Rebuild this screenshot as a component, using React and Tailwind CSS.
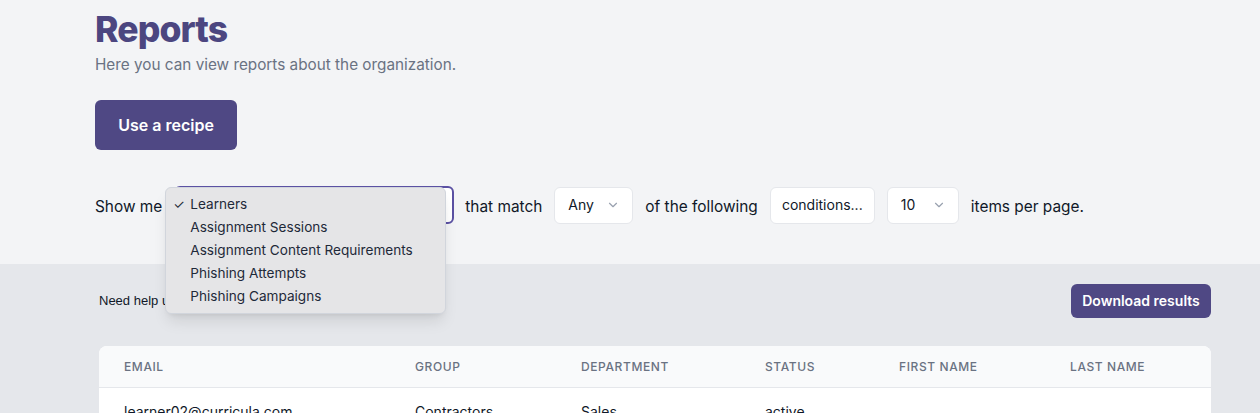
import { ChevronDown } from 'lucide-react';

const font = { fontFamily: 'Inter, "Noto Sans", sans-serif' };
const body = { fontFamily: '"Liberation Sans", Arial, sans-serif' };

const options = [
  'Learners',
  'Assignment Sessions',
  'Assignment Content Requirements',
  'Phishing Attempts',
  'Phishing Campaigns',
];

const columns = ['Email', 'Group', 'Department', 'Status', 'First name', 'Last name'];
const row = ['learner02@curricula.com', 'Contractors', 'Sales', 'active', '', ''];

const SmallSelect = ({ value, width }) => (
  <div
    className={`flex items-center justify-between h-[37px] ${width} pl-[13px] pr-[12px] bg-white border border-gray-200 rounded-md text-sm text-gray-900`}
  >
    <span>{value}</span>
    <ChevronDown className="w-[14px] h-[14px] text-gray-400" strokeWidth={2} />
  </div>
);

export default function App() {
  return (
    <div className="min-h-screen bg-gray-200" style={font}>
      {/* Header area */}
      <div className="bg-gray-100 px-[95px] pt-[10px] h-[264px]">
        <h1 className="text-[35.5px] leading-[40px] font-extrabold tracking-tight text-[#4c4680]">Reports</h1>
        <p className="text-[15.3px] leading-6 text-gray-500 mt-[3px]">Here you can view reports about the organization.</p>
        <button
          type="button"
          className="mt-[23px] h-[50px] w-[142px] rounded-md bg-[#4f4884] text-white font-semibold text-base"
        >
          Use a recipe
        </button>

        <div className="mt-[36px] flex items-center text-[15.4px] text-gray-900">
          <span className="pt-[3px]">Show me</span>
          <div className="relative ml-[12px]">
            <div className="w-[280px] h-[38px] rounded-md border-2 border-[#5b51a3] bg-white" />
            {/* Open native-style menu */}
            <div className="absolute left-[-9px] top-[1px] w-[281px] py-[5px] rounded-md bg-[#e5e5e7] border border-gray-300 shadow-lg z-10">
              {options.map((o, i) => (
                <div key={o} className="flex items-center h-[23px] text-[13.6px] text-gray-800">
                  <span className="w-[24px] pl-[7px] text-[13px]">{i === 0 ? '✓' : ''}</span>
                  <span>{o}</span>
                </div>
              ))}
            </div>
          </div>
          <span className="ml-[11px] pt-[3px]">that match</span>
          <div className="ml-[12px]">
            <SmallSelect value="Any" width="w-[79px]" />
          </div>
          <span className="ml-[12px] pt-[3px]">of the following</span>
          <button
            type="button"
            className="ml-[12px] h-[37px] w-[105px] bg-white border border-gray-200 rounded-md text-sm text-gray-900"
          >
            conditions...
          </button>
          <div className="ml-[12px]">
            <SmallSelect value="10" width="w-[72px]" />
          </div>
          <span className="ml-[12px] pt-[3px]">items per page.</span>
        </div>
      </div>

      {/* Results area */}
      <div className="pl-[99px] pr-[49px]">
        <div className="flex items-center justify-between pt-[20px]">
          <p className="text-[13px] text-gray-900" style={body}>
            Need help using reports? Check out our{' '}
            <a href="#" className="underline text-[#4f4884]">documentation.</a>
          </p>
          <button
            type="button"
            className="h-[34px] w-[140px] rounded-md bg-[#4f4884] text-white font-semibold text-sm"
          >
            Download results
          </button>
        </div>

        <div className="mt-[28px] bg-white rounded-t-lg overflow-hidden">
          <div className="grid grid-cols-[291px_166px_184px_134px_171px_1fr] h-[42px] items-center bg-gray-50 border-b border-gray-200 text-xs font-medium uppercase tracking-wider text-gray-500">
            {columns.map((c) => (
              <div key={c} className="pl-[25px]">{c}</div>
            ))}
          </div>
          <div className="grid grid-cols-[291px_166px_184px_134px_171px_1fr] h-[48px] items-center text-sm text-gray-900">
            {row.map((c, i) => (
              <div key={i} className="pl-[25px]">{c}</div>
            ))}
          </div>
        </div>
      </div>
    </div>
  );
}
